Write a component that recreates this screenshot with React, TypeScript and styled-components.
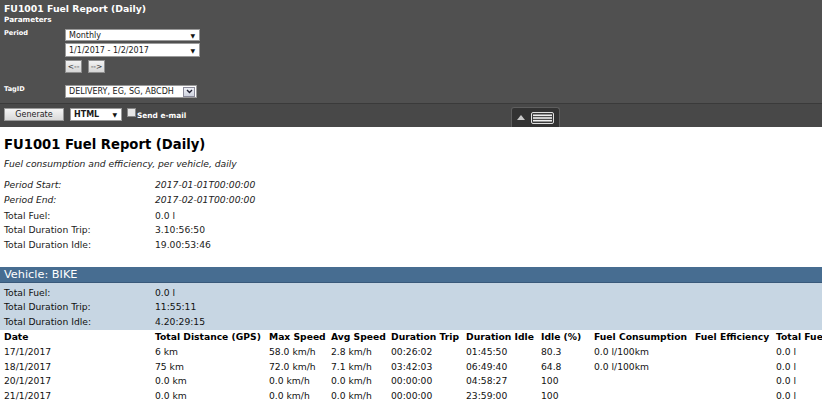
import React from "react";
import styled, { createGlobalStyle } from "styled-components";

const GlobalStyle = createGlobalStyle`
  html, body { margin: 0; padding: 0; background: #fff; overflow: hidden; }
  body { font-family: "DejaVu Sans", Verdana, sans-serif; font-size: 9.2px; color: #000; }
`;

const Header = styled.div`
  background: #505050;
  color: #fff;
  padding: 3px 4px 0 4px;
  height: 103px;
  box-sizing: border-box;
`;

const HeaderTitle = styled.div`
  font-size: 9.3px;
  font-weight: bold;
  line-height: 12px;
`;

const ParamsLabel = styled.div`
  font-size: 7.3px;
  font-weight: bold;
  line-height: 9px;
`;

const ParamRow = styled.div<{ $top: number }>`
  display: grid;
  grid-template-columns: 61px auto;
  margin-top: ${(p) => p.$top}px;
`;

const ParamName = styled.div`
  font-size: 6.6px;
  font-weight: bold;
  line-height: 8px;
`;

const ParamControls = styled.div`
  display: flex;
  flex-direction: column;
  gap: 2px;
`;

const SelectBox = styled.div<{ $w: number; $h?: number; $bold?: boolean }>`
  width: ${(p) => p.$w}px;
  height: ${(p) => p.$h ?? 13}px;
  box-sizing: border-box;
  background: #fff;
  border: 1px solid #9a9a9a;
  color: #1a1a1a;
  font-size: 8px;
  font-weight: ${(p) => (p.$bold ? "bold" : "normal")};
  display: flex;
  align-items: center;
  justify-content: space-between;
  padding: 0 4px 0 3px;
`;

const Arrow = styled.span`
  font-size: 6px;
  color: #111;
`;

const NavRow = styled.div`
  display: flex;
  gap: 6px;
  margin-top: 1px;
`;

const NavButton = styled.div`
  width: 17px;
  height: 13px;
  box-sizing: border-box;
  background: linear-gradient(#f2f2f2, #d6d6d6);
  border: 1px solid #8e8e8e;
  color: #333;
  font-size: 7.5px;
  display: flex;
  align-items: center;
  justify-content: center;
`;

const DropBtn = styled.div`
  width: 12px;
  height: 10px;
  box-sizing: border-box;
  border: 1px solid #8a8a9a;
  background: linear-gradient(#eef0f6, #cfd3df);
  display: flex;
  align-items: center;
  justify-content: center;
  margin-right: -3px;
`;

const Toolbar = styled.div`
  position: relative;
  background: #484848;
  border-top: 1px solid #3a3a3a;
  height: 24px;
  box-sizing: border-box;
  display: flex;
  align-items: flex-start;
  padding: 4px 4px 0 4px;
  gap: 6px;
  color: #fff;
`;

const GenerateButton = styled.div`
  width: 60px;
  height: 13px;
  box-sizing: border-box;
  background: linear-gradient(#f4f4f4, #d9d9d9);
  border: 1px solid #999;
  color: #222;
  font-size: 8px;
  display: flex;
  align-items: center;
  justify-content: center;
`;

const CheckLabel = styled.label`
  display: flex;
  align-items: flex-start;
  gap: 1px;
  font-size: 7.4px;
  font-weight: bold;
  margin-left: -1px;
`;

const CheckBox = styled.span`
  width: 9px;
  height: 9px;
  box-sizing: border-box;
  background: #e6e6e6;
  border: 1px solid #888;
  display: inline-block;
`;

const CheckText = styled.span`
  padding-top: 3px;
`;

const ToggleTab = styled.div`
  position: absolute;
  left: 511px;
  top: 3px;
  width: 49px;
  height: 20px;
  box-sizing: border-box;
  background: #333;
  border: 1px solid #5e5e5e;
  border-bottom: none;
  border-radius: 3px 3px 0 0;
  display: flex;
  align-items: center;
  gap: 6px;
  padding-left: 5px;
`;

const Content = styled.div`
  padding: 0 4px;
`;

const ReportTitle = styled.div`
  font-size: 13.2px;
  font-weight: bold;
  line-height: 17px;
  margin-top: 9px;
`;

const Subtitle = styled.div`
  font-style: italic;
  line-height: 12px;
  margin-top: 5px;
  color: #222;
`;

const KVGrid = styled.div<{ $top: number; $italic?: boolean }>`
  display: grid;
  grid-template-columns: 151px auto;
  margin-top: ${(p) => p.$top}px;
  line-height: 14.8px;
  font-style: ${(p) => (p.$italic ? "italic" : "normal")};
  color: #222;
`;

const VehicleBar = styled.div`
  margin-top: 14px;
  background: #476d91;
  border-bottom: 1px solid #39597a;
  color: #fff;
  font-size: 11.3px;
  line-height: 15px;
  padding: 0 4px;
`;

const Summary = styled.div`
  background: #c7d6e3;
  padding: 3px 4px 1px 4px;
  display: grid;
  grid-template-columns: 151px auto;
  line-height: 14.5px;
  color: #111;
`;

const DataTable = styled.table`
  border-collapse: collapse;
  table-layout: fixed;
  margin-left: 4px;
  width: 900px;
`;

const Th = styled.th`
  text-align: left;
  font-weight: bold;
  padding: 0;
  line-height: 14.5px;
  white-space: nowrap;
`;

const Td = styled.td`
  padding: 0;
  line-height: 14.6px;
  white-space: nowrap;
  color: #111;
`;

const cols = [151, 114, 62, 60, 75, 75, 53, 101, 81, 128];
const headers = [
  "Date",
  "Total Distance (GPS)",
  "Max Speed",
  "Avg Speed",
  "Duration Trip",
  "Duration Idle",
  "Idle (%)",
  "Fuel Consumption",
  "Fuel Efficiency",
  "Total Fuel",
];
const rows = [
  ["17/1/2017", "6 km", "58.0 km/h", "2.8 km/h", "00:26:02", "01:45:50", "80.3", "0.0 l/100km", "", "0.0 l"],
  ["18/1/2017", "75 km", "72.0 km/h", "7.1 km/h", "03:42:03", "06:49:40", "64.8", "0.0 l/100km", "", "0.0 l"],
  ["20/1/2017", "0.0 km", "0.0 km/h", "0.0 km/h", "00:00:00", "04:58:27", "100", "", "", "0.0 l"],
  ["21/1/2017", "0.0 km", "0.0 km/h", "0.0 km/h", "00:00:00", "23:59:00", "100", "", "", "0.0 l"],
];

export default function App() {
  return (
    <>
      <GlobalStyle />
      <Header>
        <HeaderTitle>FU1001 Fuel Report (Daily)</HeaderTitle>
        <ParamsLabel>Parameters</ParamsLabel>
        <ParamRow $top={5}>
          <ParamName>Period</ParamName>
          <ParamControls>
            <SelectBox $w={135} $h={12}>
              <span>Monthly</span>
              <Arrow>▼</Arrow>
            </SelectBox>
            <SelectBox $w={135} $h={14}>
              <span>1/1/2017 - 1/2/2017</span>
              <Arrow>▼</Arrow>
            </SelectBox>
            <NavRow>
              <NavButton>&lt;--</NavButton>
              <NavButton>--&gt;</NavButton>
            </NavRow>
          </ParamControls>
        </ParamRow>
        <ParamRow $top={12}>
          <ParamName>TagID</ParamName>
          <ParamControls>
            <SelectBox $w={132} $h={13}>
              <span>DELIVERY, EG, SG, ABCDH</span>
              <DropBtn>
                <svg width="7" height="5" viewBox="0 0 7 5">
                  <path d="M1 1 L3.5 3.5 L6 1" stroke="#223" strokeWidth="1.4" fill="none" />
                </svg>
              </DropBtn>
            </SelectBox>
          </ParamControls>
        </ParamRow>
      </Header>
      <Toolbar>
        <GenerateButton>Generate</GenerateButton>
        <SelectBox $w={52} $h={13} $bold>
          <span>HTML</span>
          <Arrow>▼</Arrow>
        </SelectBox>
        <CheckLabel>
          <CheckBox />
          <CheckText>Send e-mail</CheckText>
        </CheckLabel>
        <ToggleTab>
          <svg width="8" height="5" viewBox="0 0 8 5">
            <path d="M0 5 L4 0 L8 5 Z" fill="#c8c8c8" />
          </svg>
          <svg width="23" height="12" viewBox="0 0 23 12">
            <rect x="0.5" y="0.5" width="22" height="11" rx="1.5" fill="#3a3a3a" stroke="#e0e0e0" />
            <rect x="2" y="2.5" width="19" height="1.6" fill="#f0f0f0" />
            <rect x="2" y="5.2" width="19" height="1.6" fill="#f0f0f0" />
            <rect x="2" y="7.9" width="19" height="1.6" fill="#f0f0f0" />
          </svg>
        </ToggleTab>
      </Toolbar>
      <Content>
        <ReportTitle>FU1001 Fuel Report (Daily)</ReportTitle>
        <Subtitle>Fuel consumption and efficiency, per vehicle, daily</Subtitle>
        <KVGrid $top={8} $italic>
          <span>Period Start:</span>
          <span>2017-01-01T00:00:00</span>
          <span>Period End:</span>
          <span>2017-02-01T00:00:00</span>
        </KVGrid>
        <KVGrid $top={1}>
          <span>Total Fuel:</span>
          <span>0.0 l</span>
          <span>Total Duration Trip:</span>
          <span>3.10:56:50</span>
          <span>Total Duration Idle:</span>
          <span>19.00:53:46</span>
        </KVGrid>
      </Content>
      <VehicleBar>Vehicle: BIKE</VehicleBar>
      <Summary>
        <span>Total Fuel:</span>
        <span>0.0 l</span>
        <span>Total Duration Trip:</span>
        <span>11:55:11</span>
        <span>Total Duration Idle:</span>
        <span>4.20:29:15</span>
      </Summary>
      <DataTable>
        <colgroup>
          {cols.map((w, i) => (
            <col key={i} style={{ width: w }} />
          ))}
        </colgroup>
        <thead>
          <tr>
            {headers.map((h) => (
              <Th key={h}>{h}</Th>
            ))}
          </tr>
        </thead>
        <tbody>
          {rows.map((r) => (
            <tr key={r[0]}>
              {r.map((c, i) => (
                <Td key={i}>{c}</Td>
              ))}
            </tr>
          ))}
        </tbody>
      </DataTable>
    </>
  );
}
